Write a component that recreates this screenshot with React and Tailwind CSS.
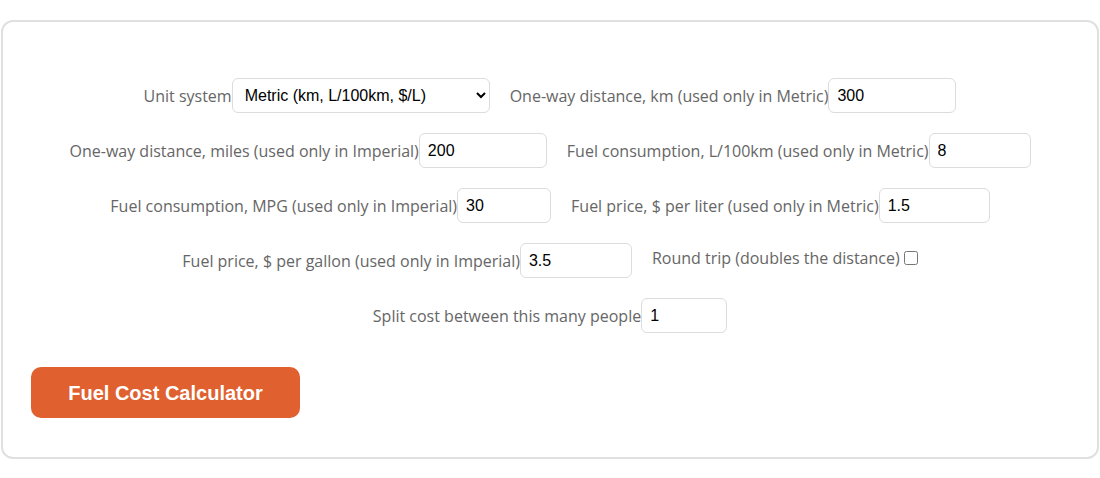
import { useState } from "react";

const labelCls = "text-[16px] text-[#666666] whitespace-nowrap";
const inputCls =
  "h-[35px] border border-[#dcdcdc] rounded-md px-2 text-[16px] text-black bg-white outline-none";

const Field = ({ label, value, width }) => {
  const [val, setVal] = useState(value);
  return (
    <div className="flex items-center">
      <label className={labelCls}>{label}</label>
      <input
        type="text"
        value={val}
        onChange={(e) => setVal(e.target.value)}
        className={`${inputCls} ${width}`}
        style={{ fontFamily: "'Liberation Sans', Arial, sans-serif" }}
      />
    </div>
  );
};

const App = () => {
  const [unit, setUnit] = useState("metric");
  const [round, setRound] = useState(false);

  return (
    <div
      className="w-[1100px] h-[478px] bg-white pt-[20px] px-[1px]"
      style={{ fontFamily: "'Open Sans', 'Noto Sans', sans-serif" }}
    >
      <div className="border-2 border-[#e0e0e0] rounded-xl pt-[56px] pb-[39px] px-[28px]">
        <div className="flex flex-col gap-5">
          <div className="flex justify-center gap-5">
            <div className="flex items-center">
              <label className={labelCls}>Unit system</label>
              <select
                value={unit}
                onChange={(e) => setUnit(e.target.value)}
                className={`${inputCls} w-[258px]`}
                style={{ fontFamily: "'Liberation Sans', Arial, sans-serif" }}
              >
                <option value="metric">Metric (km, L/100km, $/L)</option>
                <option value="imperial">Imperial (miles, MPG, $/gal)</option>
              </select>
            </div>
            <Field label="One-way distance, km (used only in Metric)" value="300" width="w-[128px]" />
          </div>

          <div className="flex justify-center gap-5">
            <Field label="One-way distance, miles (used only in Imperial)" value="200" width="w-[128px]" />
            <Field label="Fuel consumption, L/100km (used only in Metric)" value="8" width="w-[102px]" />
          </div>

          <div className="flex justify-center gap-5">
            <Field label="Fuel consumption, MPG (used only in Imperial)" value="30" width="w-[94px]" />
            <Field label="Fuel price, $ per liter (used only in Metric)" value="1.5" width="w-[111px]" />
          </div>

          <div className="flex justify-center gap-5">
            <Field label="Fuel price, $ per gallon (used only in Imperial)" value="3.5" width="w-[112px]" />
            <div className="flex items-center -mt-[6px]">
              <label className={labelCls}>Round trip (doubles the distance)</label>
              <input
                type="checkbox"
                checked={round}
                onChange={(e) => setRound(e.target.checked)}
                className="ml-[4px] w-[14px] h-[14px]"
              />
            </div>
          </div>

          <div className="flex justify-center gap-5">
            <Field label="Split cost between this many people" value="1" width="w-[86px]" />
          </div>
        </div>

        <button
          type="button"
          className="mt-[34px] w-[269px] h-[51px] rounded-[10px] bg-[#e0602f] text-white text-[20px] font-bold"
          style={{ fontFamily: "'Liberation Sans', Arial, sans-serif" }}
        >
          Fuel Cost Calculator
        </button>
      </div>
    </div>
  );
};

export default App;
